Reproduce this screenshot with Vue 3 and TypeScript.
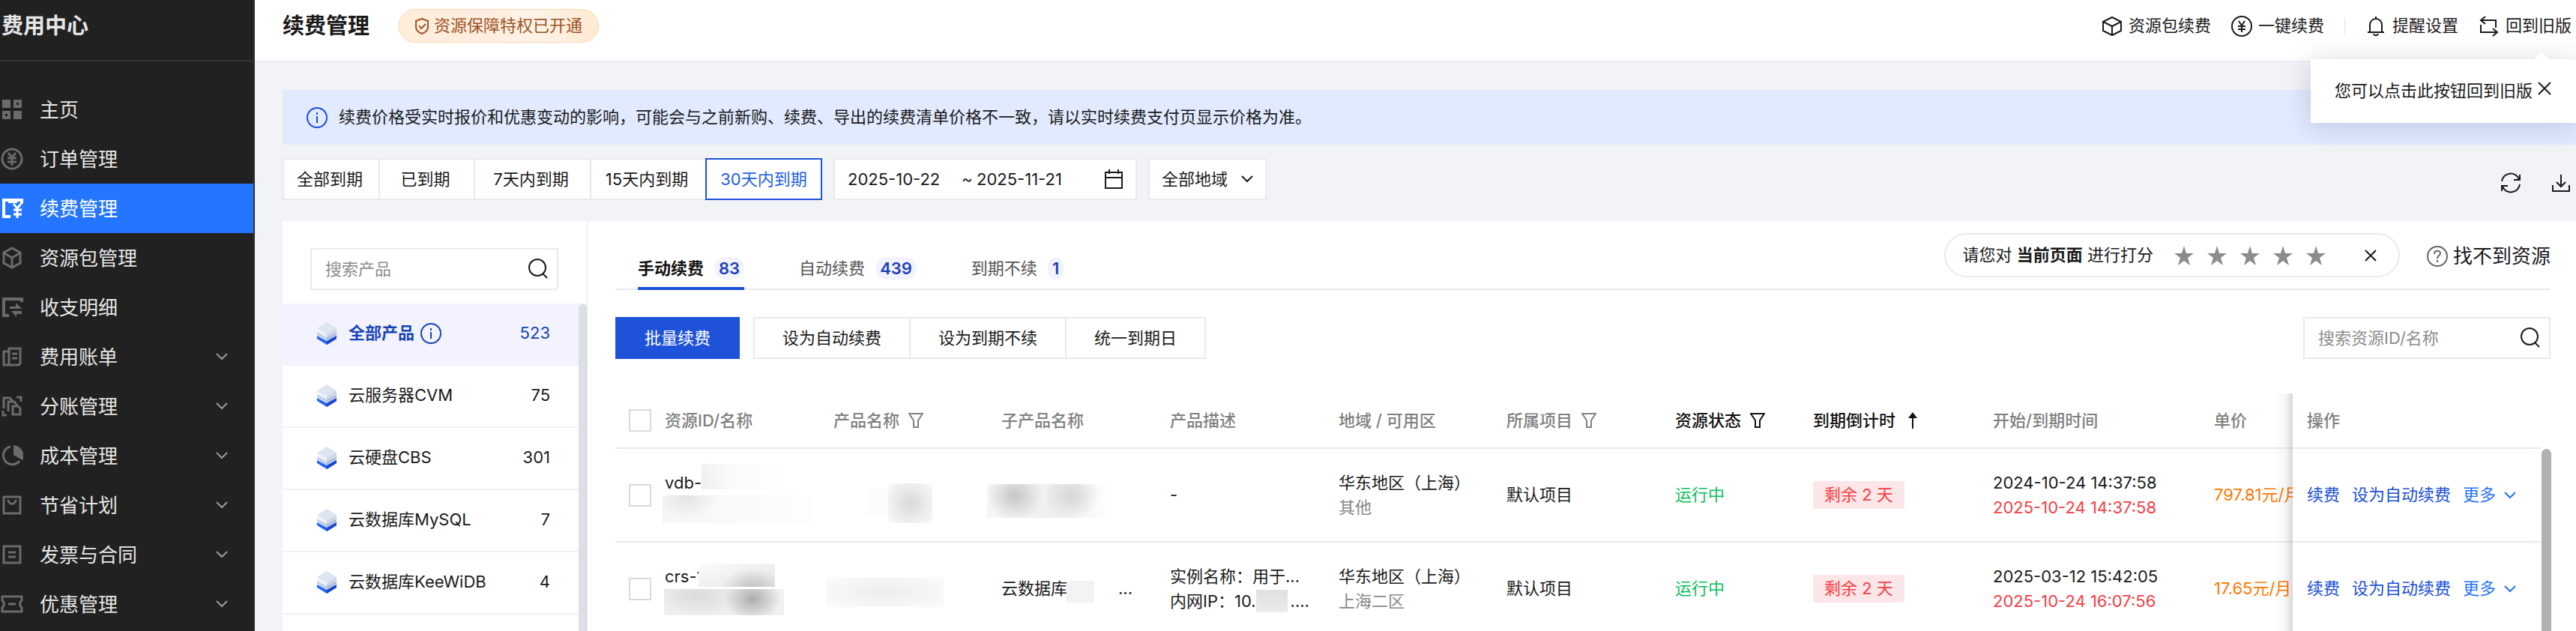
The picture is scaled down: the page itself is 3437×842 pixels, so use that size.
<script setup lang="ts">
import { ref } from 'vue'

interface MenuItem {
  icon: string
  label: string
  expandable?: boolean
}

interface Resource {
  key: string
  id: string
  sub: string
  desc: string[]
  region: string
  zone: string
  start: string
  end: string
  price: string
}

const menu: MenuItem[] = [
  { icon: 'home', label: '主页' },
  { icon: 'order', label: '订单管理' },
  { icon: 'renew', label: '续费管理' },
  { icon: 'package', label: '资源包管理' },
  { icon: 'flow', label: '收支明细' },
  { icon: 'bill', label: '费用账单', expandable: true },
  { icon: 'split', label: '分账管理', expandable: true },
  { icon: 'cost', label: '成本管理', expandable: true },
  { icon: 'saving', label: '节省计划', expandable: true },
  { icon: 'invoice', label: '发票与合同', expandable: true },
  { icon: 'coupon', label: '优惠管理', expandable: true },
]
const activeMenu = ref('renew')

const ranges = ['全部到期', '已到期', '7天内到期', '15天内到期', '30天内到期']
const activeRange = ref('30天内到期')
const dateFrom = ref('2025-10-22')
const dateTo = ref('2025-11-21')

const products = [
  { name: '全部产品', count: 523 },
  { name: '云服务器CVM', count: 75 },
  { name: '云硬盘CBS', count: 301 },
  { name: '云数据库MySQL', count: 7 },
  { name: '云数据库KeeWiDB', count: 4 },
]
const activeProduct = ref('全部产品')
const productQuery = ref('')
const resourceQuery = ref('')

const tabs = [
  { label: '手动续费', count: 83 },
  { label: '自动续费', count: 439 },
  { label: '到期不续', count: 1 },
]
const activeTab = ref('手动续费')

const columns = [
  { title: '资源ID/名称', width: 'w-l' },
  { title: '产品名称', width: 'w-m', filter: true },
  { title: '子产品名称', width: 'w-l' },
  { title: '产品描述', width: 'w-l' },
  { title: '地域 / 可用区', width: 'w-m' },
  { title: '所属项目', width: 'w-l', filter: true },
  { title: '资源状态', width: 'w-s', filter: true, strong: true },
  { title: '到期倒计时', width: 'w-c', sort: true, strong: true },
  { title: '开始/到期时间', width: 'w-t' },
  { title: '单价', width: 'w-s' },
]

const rows: Resource[] = [
  {
    key: 'vdb',
    id: 'vdb-',
    sub: '',
    desc: ['-'],
    region: '华东地区（上海）',
    zone: '其他',
    start: '2024-10-24 14:37:58',
    end: '2025-10-24 14:37:58',
    price: '797.81元/月',
  },
  {
    key: 'crs',
    id: 'crs-1',
    sub: '云数据库',
    desc: ['实例名称：用于...'],
    region: '华东地区（上海）',
    zone: '上海二区',
    start: '2025-03-12 15:42:05',
    end: '2025-10-24 16:07:56',
    price: '17.65元/月',
  },
]
</script>

<template>
  <div class="shell">
    <aside class="side">
      <h2 class="side-title">费用中心</h2>
      <nav>
        <ul class="menu">
          <li v-for="item in menu" :key="item.icon">
            <a href="#" class="menu-item" :class="{ active: item.icon === activeMenu }" @click.prevent="activeMenu = item.icon">
              <svg class="menu-icon" viewBox="0 0 30 30" fill="none" stroke="currentColor" stroke-width="4" aria-hidden="true">
                <g v-if="item.icon === 'home'" stroke="none" fill="currentColor" fill-rule="evenodd">
                  <path d="M2 2h11v11H2zM17 2h11v11H17zM21 6v3h3V6zM2 17h11v11H2zM6 21v3h3v-3zM17 17h11v11H17z" />
                </g>
                <g v-else-if="item.icon === 'order'">
                  <circle cx="15" cy="15" r="13" stroke-width="3" />
                  <path d="M10 7l5 6 5-6M15 12v12M9 14h12M9 19h12" stroke-width="3" />
                </g>
                <g v-else-if="item.icon === 'renew'">
                  <path d="M13 26H4V4h24v5" />
                  <path d="M10 6h12" />
                  <path d="M17 9l5 6 5-6M22 14v14M17 17h11M17 23h11" stroke-width="3" />
                </g>
                <g v-else-if="item.icon === 'package'">
                  <path d="M15 2l11 6v14l-11 6-11-6V8zM5 9l10 6 10-6M15 15v12" stroke-width="3" />
                </g>
                <g v-else-if="item.icon === 'flow'">
                  <path d="M11 26H4V4h24v4" />
                  <path d="M12 14h8V9l8 8H12zM28 20v4h-7v4l-7-8z" stroke="none" fill="currentColor" />
                </g>
                <g v-else-if="item.icon === 'bill'">
                  <path d="M11 4h15v20l-2 2H4V8h7zM11 6v20M15 11h7M15 17h7" stroke-width="3" />
                </g>
                <g v-else-if="item.icon === 'split'">
                  <path d="M4 18V4h8l4 4M10 22V9h8l4 5M16 15h7l3 3v8H16zM21 3h6v6M3 21v6h5" stroke-width="3" />
                </g>
                <g v-else-if="item.icon === 'cost'">
                  <path d="M13 3a12 12 0 1 0 12 19" stroke-width="3" />
                  <path d="M17 1a14 14 0 0 1 12 20l-12-7z" stroke="none" fill="currentColor" />
                </g>
                <g v-else-if="item.icon === 'saving'">
                  <path d="M4 4h22v22H4z" stroke-width="3" />
                  <path d="M10 8c0 7 10 7 10 0" stroke-width="3" />
                </g>
                <g v-else-if="item.icon === 'invoice'">
                  <path d="M4 4h22v22H4zM10 12h10M10 18h10" stroke-width="3" />
                </g>
                <g v-else>
                  <path d="M2 5h26v5q-5 5 0 10v5H2v-5q5-5 0-10zM10 15h10" stroke-width="3" />
                </g>
              </svg>
              <span>{{ item.label }}</span>
              <svg v-if="item.expandable" class="menu-arrow" viewBox="0 0 16 10" fill="none" stroke="currentColor" stroke-width="2" aria-hidden="true"><path d="M1 1l7 7 7-7" /></svg>
            </a>
          </li>
        </ul>
      </nav>
    </aside>

    <div class="main">
      <header class="top">
        <h1 class="page-title">续费管理</h1>
        <span class="privilege">
          <svg viewBox="0 0 20 22" fill="none" stroke="currentColor" stroke-width="2" aria-hidden="true"><path d="M10 1l8 3v8c0 4-3 7-8 9-5-2-8-5-8-9V4zM6 10l3 4 6-6" /></svg>
          资源保障特权已开通
        </span>
        <div class="top-actions">
          <a href="#" class="top-link">
            <svg viewBox="0 0 28 28" fill="none" stroke="currentColor" stroke-width="2" stroke-linejoin="round" aria-hidden="true"><path d="M14 2l12 6v12l-12 6-12-6V8zM2 8l12 6 12-6M14 14v12" /></svg>
            资源包续费
          </a>
          <a href="#" class="top-link">
            <svg viewBox="0 0 28 28" fill="none" stroke="currentColor" stroke-width="2" aria-hidden="true"><circle cx="14" cy="14" r="13" /><path d="M10 7l4 6 4-6M14 13v9M9 14h10M9 18h10" /></svg>
            一键续费
          </a>
          <i class="divider"></i>
          <a href="#" class="top-link">
            <svg viewBox="0 0 28 28" fill="none" stroke="currentColor" stroke-width="2" aria-hidden="true"><path d="M14 1v3M6 22V12a8 8 0 0 1 16 0v10M3 22h22M11 24c1 3 5 3 6 0" /></svg>
            提醒设置
          </a>
          <a href="#" class="top-link">
            <svg viewBox="0 0 28 28" fill="none" stroke="currentColor" stroke-width="2" aria-hidden="true"><path d="M9 1L3 6l6 5M3 6h20v10M19 17l6 5-6 5M25 22H3V12" /></svg>
            回到旧版
          </a>
        </div>
        <div class="popup" role="tooltip">
          <span>您可以点击此按钮回到旧版</span>
          <button type="button" class="plain popup-close" aria-label="关闭">
            <svg viewBox="0 0 18 18" fill="none" stroke="currentColor" stroke-width="2"><path d="M1 1l16 16M17 1L1 17" /></svg>
          </button>
        </div>
      </header>

      <main class="content">
        <div class="notice">
          <svg class="info" viewBox="0 0 28 28" fill="none" stroke="currentColor" stroke-width="2" aria-hidden="true"><circle cx="14" cy="14" r="13" /><path d="M14 12v9M14 7v3" /></svg>
          <p>续费价格受实时报价和优惠变动的影响，可能会与之前新购、续费、导出的续费清单价格不一致，请以实时续费支付页显示价格为准。</p>
        </div>

        <div class="filters">
          <div class="ranges">
            <button v-for="r in ranges" :key="r" type="button" :class="{ on: r === activeRange }" @click="activeRange = r">{{ r }}</button>
          </div>
          <div class="dates">
            <input v-model="dateFrom" type="text" aria-label="开始日期" />
            <span>~</span>
            <input v-model="dateTo" type="text" aria-label="结束日期" />
            <svg viewBox="0 0 26 26" fill="none" stroke="currentColor" stroke-width="2" aria-hidden="true"><path d="M2 4h22v21H2zM2 11h22M7 0v6M19 0v6" /></svg>
          </div>
          <label class="region">
            <select aria-label="地域"><option>全部地域</option></select>
            <svg viewBox="0 0 16 10" fill="none" stroke="currentColor" stroke-width="2" aria-hidden="true"><path d="M1 1l7 7 7-7" /></svg>
          </label>
          <div class="tools">
            <button type="button" class="plain" aria-label="刷新">
              <svg viewBox="0 0 28 28" fill="none" stroke="currentColor" stroke-width="2"><path d="M2 12A12 12 0 0 1 25 9M26 3v7h-8M26 16A12 12 0 0 1 3 19M2 25v-7h8" /></svg>
            </button>
            <button type="button" class="plain" aria-label="下载">
              <svg viewBox="0 0 28 28" fill="none" stroke="currentColor" stroke-width="2"><path d="M3 17v8h22v-8M14 3v16M8 13l6 6 6-6" /></svg>
            </button>
          </div>
        </div>

        <div class="panel">
          <section class="products">
            <label class="search product-search">
              <input v-model="productQuery" type="text" placeholder="搜索产品" aria-label="搜索产品" />
              <svg viewBox="0 0 28 28" fill="none" stroke="currentColor" stroke-width="2" aria-hidden="true"><circle cx="13" cy="12" r="11" /><path d="M20 20l6 6" /></svg>
            </label>
            <div class="product-body">
              <ul class="product-list">
                <li v-for="p in products" :key="p.name">
                  <button type="button" class="product" :class="{ on: p.name === activeProduct }" @click="activeProduct = p.name">
                    <svg class="cube" viewBox="0 0 28 32" aria-hidden="true">
                      <path d="M1 19l13 7 13-7v4l-13 8-13-8z" fill="#2566f5" />
                      <path d="M14 26l13-7v4l-13 8z" fill="#1c45cf" />
                      <path d="M1 14l13 7 13-7v4l-13 8-13-8z" fill="#c3d2ec" />
                      <path d="M14 21l13-7v4l-13 8z" fill="#aebfe0" />
                      <path d="M1 9l13-8 13 8-13 8z" fill="#dde4f2" />
                      <path d="M1 9l13 8v4L1 13z" fill="#eff2f8" />
                      <path d="M27 9l-13 8v4l13-8z" fill="#cdd4e2" />
                    </svg>
                    <span>{{ p.name }}</span>
                    <svg v-if="p.name === '全部产品'" class="info" viewBox="0 0 28 28" fill="none" stroke="currentColor" stroke-width="2" aria-hidden="true"><circle cx="14" cy="14" r="13" /><path d="M14 12v9M14 7v3" /></svg>
                    <span class="count">{{ p.count }}</span>
                  </button>
                </li>
              </ul>
              <div class="list-bar"></div>
            </div>
          </section>

          <section class="resources">
            <div class="tab-row">
              <div class="tabs" role="tablist">
                <button v-for="t in tabs" :key="t.label" type="button" role="tab" class="tab" :class="{ on: t.label === activeTab }" :aria-selected="t.label === activeTab" @click="activeTab = t.label">
                  {{ t.label }}<span class="badge">{{ t.count }}</span>
                </button>
              </div>
              <div class="rating">
                <span>请您对 <b>当前页面</b> 进行打分</span>
                <div class="stars">
                  <button v-for="n in 5" :key="n" type="button" class="plain" :aria-label="`${n} 星`">
                    <svg viewBox="0 0 26 26" fill="#8c8c8c"><path d="M13 0l3 10h10l-8 6 3 10-8-6-8 6 3-10-8-6h10z" /></svg>
                  </button>
                </div>
                <button type="button" class="plain rating-close" aria-label="关闭评分">
                  <svg viewBox="0 0 16 16" fill="none" stroke="currentColor" stroke-width="2"><path d="M1 1l14 14M15 1L1 15" /></svg>
                </button>
              </div>
              <a href="#" class="help">
                <svg viewBox="0 0 28 28" fill="none" stroke="#666" stroke-width="2" aria-hidden="true"><circle cx="14" cy="14" r="13" /><path d="M10 11c0-6 8-5 8-1 0 3-4 3-4 7M14 19v3" /></svg>
                找不到资源
              </a>
            </div>

            <div class="actions">
              <button type="button" class="primary">批量续费</button>
              <div class="group">
                <button type="button">设为自动续费</button>
                <button type="button">设为到期不续</button>
                <button type="button">统一到期日</button>
              </div>
              <label class="search resource-search">
                <input v-model="resourceQuery" type="text" placeholder="搜索资源ID/名称" aria-label="搜索资源ID/名称" />
                <svg viewBox="0 0 28 28" fill="none" stroke="currentColor" stroke-width="2" aria-hidden="true"><circle cx="13" cy="12" r="11" /><path d="M20 20l6 6" /></svg>
              </label>
            </div>

            <div class="table-area">
              <div class="table-scroll">
                <table>
                  <colgroup>
                    <col class="w-check" />
                    <col v-for="c in columns" :key="c.title" :class="c.width" />
                    <col class="w-ops" />
                  </colgroup>
                  <thead>
                    <tr>
                      <th class="check"><input type="checkbox" aria-label="全选" /></th>
                      <th v-for="c in columns" :key="c.title" :class="{ strong: c.strong }">
                        <div class="th">
                          {{ c.title }}
                          <svg v-if="c.filter" class="funnel" viewBox="0 0 20 20" fill="none" stroke="currentColor" stroke-width="2" aria-hidden="true"><path d="M1 1h18l-6 9v9H7v-9z" /></svg>
                          <svg v-if="c.sort" class="sort" viewBox="0 0 12 22" aria-hidden="true"><path d="M6 0l6 8H7v14H5V8H0z" fill="currentColor" /></svg>
                        </div>
                      </th>
                      <th class="ops">操作</th>
                    </tr>
                  </thead>
                  <tbody>
                    <tr v-for="row in rows" :key="row.key" :class="`row-${row.key}`">
                      <td class="check"><input type="checkbox" :aria-label="`选择 ${row.id}`" /></td>
                      <td class="id-cell">
                        <div class="line">{{ row.id }}</div>
                        <div class="line"></div>
                        <span class="mask mask-id"></span><span class="mask mask-name"></span>
                      </td>
                      <td><span class="mask mask-edge"></span><span class="mask mask-product"></span></td>
                      <td>
                        <div v-if="row.sub" class="sub">{{ row.sub }}<span>...</span></div>
                        <span class="mask mask-sub"></span>
                      </td>
                      <td>
                        <div v-for="d in row.desc" :key="d" class="line">{{ d }}</div>
                        <div v-if="row.key === 'crs'" class="line ip">内网IP：10.<i></i>....<span class="mask mask-ip"></span></div>
                      </td>
                      <td>
                        <div class="line">{{ row.region }}</div>
                        <div class="line muted">{{ row.zone }}</div>
                      </td>
                      <td>默认项目</td>
                      <td class="ok">运行中</td>
                      <td><span class="remain">剩余 2 天</span></td>
                      <td>
                        <div class="line">{{ row.start }}</div>
                        <div class="line danger">{{ row.end }}</div>
                      </td>
                      <td class="price">{{ row.price }}</td>
                      <td class="ops">
                        <div class="op-list">
                          <a href="#">续费</a>
                          <a href="#">设为自动续费</a>
                          <button type="button" class="plain more">更多
                            <svg viewBox="0 0 16 10" fill="none" stroke="currentColor" stroke-width="2" aria-hidden="true"><path d="M1 1l7 7 7-7" /></svg>
                          </button>
                        </div>
                      </td>
                    </tr>
                  </tbody>
                </table>
              </div>
              <div class="table-bar"></div>
            </div>
          </section>
        </div>
      </main>
    </div>
  </div>
</template>

<style>
html,
body {
  overflow: hidden;
}
</style>

<style scoped>
* {
  box-sizing: border-box;
}
.shell {
  display: flex;
  height: 100vh;
  overflow: hidden;
  font-family: Inter, "Noto Sans CJK SC", sans-serif;
  font-size: 22px;
  line-height: 33px;
  color: #1a1a1a;
  background: #f2f3f7;
  white-space: nowrap;
}
button,
input,
select {
  font: inherit;
  color: inherit;
  border-radius: 0;
  margin: 0;
}
button {
  cursor: pointer;
}
a {
  color: inherit;
  text-decoration: none;
}
ul,
p,
h1,
h2 {
  margin: 0;
  padding: 0;
  list-style: none;
}
svg {
  display: block;
  flex: none;
}
.plain {
  padding: 0;
  border: 0;
  background: none;
}

/* sidebar */
.side {
  flex: none;
  width: 340px;
  background: #212121;
  border-right: 2px solid #333;
  color: #e6e6e6;
}
.side-title {
  height: 82px;
  padding: 0 0 10px 2px;
  border-bottom: 2px solid #333;
  font-size: 29px;
  line-height: 70px;
  font-weight: 700;
}
.menu {
  padding-top: 31px;
}
.menu-item {
  display: flex;
  align-items: center;
  gap: 22px;
  height: 66px;
  padding: 0 34px 0 1px;
  font-size: 26px;
}
.menu-item.active {
  background: #2475ff;
  color: #fff;
}
.menu-icon {
  width: 30px;
  height: 30px;
  color: #6b6b6b;
}
.active .menu-icon {
  color: #fff;
}
.menu-arrow {
  width: 16px;
  height: 10px;
  margin-left: auto;
  color: #9a9a9a;
}

/* top bar */
.main {
  flex: 1;
  min-width: 0;
  display: flex;
  flex-direction: column;
}
.top {
  position: relative;
  z-index: 5;
  flex: none;
  display: flex;
  align-items: center;
  height: 82px;
  padding: 0 6px 12px 37px;
  background: #fff;
  border-bottom: 1px solid #e4e7ee;
}
.page-title {
  font-size: 29px;
  font-weight: 700;
}
.privilege {
  display: flex;
  align-items: center;
  gap: 6px;
  height: 45px;
  margin-left: 38px;
  padding: 0 21px;
  border: 1px solid #f9d9b4;
  border-radius: 23px;
  background: linear-gradient(90deg, #ffeddb, #ffeee0 45%, #fff3e6 70%, #ffe9d2);
  color: #9c5426;
}
.privilege svg {
  width: 20px;
  height: 22px;
}
.top-actions {
  display: flex;
  align-items: center;
  gap: 27px;
  margin-left: auto;
}
.top-link {
  display: flex;
  align-items: center;
  gap: 8px;
}
.top-link svg {
  width: 28px;
  height: 28px;
}
.divider {
  width: 1px;
  height: 22px;
  background: #e0e3e8;
}
.popup {
  position: absolute;
  top: 79px;
  right: 0;
  display: flex;
  gap: 7px;
  width: 354px;
  height: 85px;
  padding: 26px 0 0 32px;
  background: #fff;
  box-shadow: 0 4px 36px rgba(40, 50, 80, 0.2);
}
.popup::before {
  content: "";
  position: absolute;
  top: -9px;
  right: 36px;
  border: 10px solid transparent;
  border-top: 0;
  border-bottom: 9px solid #fff;
}
.popup-close {
  height: 26px;
}
.popup-close svg {
  width: 18px;
  height: 18px;
}

/* notice and filters */
.content {
  flex: 1;
  min-height: 0;
  display: flex;
  flex-direction: column;
  padding: 38px 0 0 37px;
}
.notice {
  flex: none;
  display: flex;
  align-items: center;
  gap: 15px;
  height: 73px;
  padding-left: 32px;
  background: #e1eaff;
}
.info {
  width: 28px;
  height: 28px;
}
.notice .info {
  color: #1d4fd8;
}
.filters {
  flex: none;
  display: flex;
  gap: 15px;
  height: 56px;
  margin: 18px 0 28px;
}
.ranges {
  display: grid;
  grid-template-columns: 128px 127px 155px 154px 156px;
}
.ranges button {
  padding: 0 4px 0 0;
  border: 2px solid #e7eaf0;
  border-right-width: 0;
  background: #fff;
}
.ranges button.on {
  padding: 0;
  border: 2px solid #1d52d9;
  color: #2460e0;
}
.dates {
  display: flex;
  align-items: center;
  width: 405px;
  padding: 0 16px 0 17px;
  border: 2px solid #e7eaf0;
  background: #fff;
}
.dates input {
  width: 134px;
  padding: 0;
  border: 0;
  outline: 0;
  background: none;
}
.dates span {
  width: 20px;
  margin-left: 18px;
}
.dates svg {
  width: 26px;
  height: 26px;
  margin-left: auto;
}
.region {
  display: flex;
  align-items: center;
  width: 158px;
  padding: 0 16px 0 16px;
  border: 2px solid #e7eaf0;
  background: #fff;
}
.region select {
  flex: 1;
  padding: 0;
  border: 0;
  background: none;
  appearance: none;
}
.region svg {
  width: 16px;
  height: 10px;
}
.tools {
  display: flex;
  align-items: center;
  gap: 39px;
  margin-left: auto;
  padding: 10px 6px 0 0;
}
.tools svg {
  width: 28px;
  height: 28px;
}

/* products */
.panel {
  flex: 1;
  min-height: 0;
  display: flex;
  background: #fff;
}
.products {
  flex: none;
  display: flex;
  flex-direction: column;
  width: 407px;
  border-right: 1px solid #e4e7ee;
}
.search {
  display: flex;
  align-items: center;
  height: 56px;
  padding: 0 11px 0 18px;
  border: 2px solid #e7eaf0;
  background: #fff;
}
.search input {
  flex: 1;
  min-width: 0;
  padding: 0;
  border: 0;
  outline: 0;
  background: none;
}
.search input::placeholder {
  color: #8c8c8c;
  opacity: 1;
}
.search svg {
  width: 28px;
  height: 28px;
}
.product-search {
  flex: none;
  margin: 36px 38px 18px 37px;
}
.product-body {
  flex: 1;
  min-height: 0;
  display: flex;
}
.product-list {
  flex: 1;
  overflow: hidden;
}
.product {
  display: flex;
  align-items: center;
  width: 100%;
  height: 83px;
  padding: 0 38px 2px 45px;
  border: 0;
  border-bottom: 2px solid #f1f2f8;
  background: none;
  text-align: left;
}
.product.on {
  background: #f2f3ff;
  color: #1744b5;
}
.product.on span:not(.count) {
  font-weight: 700;
}
.cube {
  width: 28px;
  height: 32px;
  margin-right: 15px;
}
.product .info {
  margin-left: 8px;
}
.count {
  margin-left: auto;
}
.list-bar {
  width: 11px;
  border-radius: 6px 6px 0 0;
  background: #dcdfe6;
}

/* tabs and rating */
.resources {
  flex: 1;
  min-width: 0;
  display: flex;
  flex-direction: column;
  padding: 0 34px 0 37px;
}
.tab-row {
  flex: none;
  display: flex;
  height: 92px;
  border-bottom: 2px solid #e7e9f0;
}
.tabs {
  display: flex;
  gap: 73px;
  padding-left: 30px;
}
.tab {
  display: flex;
  align-items: flex-start;
  gap: 14px;
  height: 92px;
  padding: 48px 0 0;
  border: 0;
  border-bottom: 4px solid transparent;
  background: none;
  line-height: 30px;
  color: #555;
}
.tab.on {
  border-bottom-color: #1d52d9;
  color: #111;
  font-weight: 700;
}
.badge {
  height: 30px;
  padding: 0 6px;
  border-radius: 15px;
  background: #f2f3ff;
  color: #1d3fb8;
  font-weight: 600;
}
.rating {
  display: flex;
  align-items: center;
  height: 59px;
  margin: 16px 0 0 auto;
  padding: 0 29px 0 23px;
  border: 2px solid #e7eaf0;
  border-radius: 30px;
}
.stars {
  display: flex;
  gap: 18px;
  margin-left: 28px;
}
.stars svg {
  width: 26px;
  height: 26px;
}
.rating-close {
  margin-left: 52px;
}
.rating-close svg {
  width: 16px;
  height: 16px;
}
.help {
  display: flex;
  align-items: center;
  gap: 7px;
  height: 59px;
  margin: 17px 0 0 36px;
  font-size: 26px;
}
.help svg {
  width: 28px;
  height: 28px;
}

/* actions */
.actions {
  flex: none;
  display: flex;
  gap: 18px;
  height: 56px;
  margin: 36px 0 46px;
}
.primary {
  padding: 0 38px;
  border: 1px solid #1d52d9;
  background: #1d52d9;
  color: #fff;
}
.group {
  display: flex;
}
.group button {
  padding: 0 37px;
  border: 2px solid #e7eaf0;
  border-right-width: 0;
  background: #fff;
}
.group button:last-child {
  border-right-width: 2px;
}
.resource-search {
  width: 330px;
  margin-left: auto;
}

/* table */
.table-area {
  flex: 1;
  min-height: 0;
  display: flex;
}
.table-scroll {
  flex: 1;
  min-width: 0;
  overflow: hidden;
}
table {
  width: 100%;
  min-width: 2630px;
  table-layout: fixed;
  border-collapse: separate;
  border-spacing: 0;
}
.w-check {
  width: 48px;
}
.w-l {
  width: 225px;
}
.w-m {
  width: 224px;
}
.w-s {
  width: 184px;
}
.w-c {
  width: 240px;
}
.w-t {
  width: 295px;
}
.w-ops {
  width: 332px;
}
th,
td {
  position: relative;
  padding: 0 18px;
  border-bottom: 2px solid #e7ebf1;
  text-align: left;
  font-weight: 400;
}
th {
  height: 74px;
  color: #808080;
  font-weight: 500;
}
th.strong {
  color: #111;
}
td {
  height: 125px;
}
.check input {
  appearance: none;
  display: block;
  width: 30px;
  height: 30px;
  border: 2px solid #d5dae4;
  background: #fff;
}
th.check,
td.check {
  padding: 0 0 0 18px;
}
.th {
  display: flex;
  align-items: center;
}
.funnel {
  width: 20px;
  height: 20px;
  margin-left: 12px;
}
.sort {
  width: 12px;
  height: 22px;
  margin-left: 17px;
}
.line {
  min-height: 33px;
}
.muted {
  color: #888;
}
.ok {
  color: #0abf5b;
}
.danger {
  color: #f54045;
}
.price {
  color: #ff7800;
}
.remain {
  display: inline-block;
  padding: 2px 15px;
  border-radius: 3px;
  background: #fce6e8;
  color: #f54045;
}
.sub span {
  margin-left: 68px;
}
.ip i {
  display: inline-block;
  width: 46px;
}
.ops {
  position: sticky;
  right: 0;
  z-index: 2;
  padding-left: 19px;
  background: #fff;
}
.ops::before {
  content: "";
  position: absolute;
  top: 0;
  bottom: -2px;
  left: -24px;
  width: 24px;
  background: linear-gradient(90deg, rgba(0, 0, 0, 0), rgba(0, 0, 0, 0.04) 60%, rgba(0, 0, 0, 0.15));
}
.op-list {
  display: flex;
  gap: 16px;
  color: #1a4fd8;
}
.more {
  display: flex;
  align-items: center;
  gap: 11px;
  color: #2673ff;
}
.more svg {
  width: 16px;
  height: 10px;
}
.table-bar {
  width: 13px;
  margin: 74px -1px 0 0;
  border-radius: 7px 7px 0 0;
  background: #b1b1b1;
}

/* redacted fragments laid over cell text */
.mask {
  position: absolute;
}
.row-vdb .mask-id {
  left: 67px;
  top: 20px;
  width: 110px;
  height: 34px;
  background: linear-gradient(75deg, #efefef, #fafafa 35%, #fefefe);
}
.row-vdb .mask-name {
  left: 15px;
  top: 62px;
  width: 198px;
  height: 37px;
  background: radial-gradient(ellipse 40px 30px at 32px 2px, #e4e4e4, transparent), linear-gradient(90deg, #f6f6f6, #fdfdfd);
}
.row-vdb .mask-edge {
  left: 64px;
  top: 52px;
  width: 27px;
  height: 36px;
  background: #fbfbfb;
}
.row-vdb .mask-product {
  left: 91px;
  top: 46px;
  width: 59px;
  height: 53px;
  background: radial-gradient(circle at center, #d9d9d9, #f9f9f9 95%);
}
.row-vdb .mask-sub {
  left: -1px;
  top: 47px;
  width: 167px;
  height: 45px;
  background: radial-gradient(ellipse 38px 34px at 37px 15px, #c6c6c6, transparent), radial-gradient(ellipse 38px 34px at 112px 15px, #d6d6d6, transparent), linear-gradient(90deg, #f6f6f6, #f0f0f0 55%, #fff);
}
.row-crs .mask-id {
  left: 63px;
  top: 28px;
  width: 102px;
  height: 31px;
  background: radial-gradient(ellipse 42px 28px at 72px 34px, #c0c0c0, transparent), linear-gradient(160deg, #fbfbfb, #e6e6e6);
}
.row-crs .mask-name {
  left: 17px;
  top: 62px;
  width: 160px;
  height: 35px;
  background: radial-gradient(ellipse 38px 30px at 118px 13px, #acacac, transparent), radial-gradient(ellipse 60px 30px at 44px 8px, #dadada, transparent), #f0f0f0;
}
.row-crs .mask-product {
  left: 9px;
  top: 46px;
  width: 156px;
  height: 40px;
  background: radial-gradient(ellipse at center, #ededed, #fafafa 90%);
}
.row-crs .mask-sub {
  left: 105px;
  top: 51px;
  width: 37px;
  height: 29px;
  background: #f3f3f3;
}
.row-crs .mask-ip {
  left: 133px;
  top: 63px;
  width: 42px;
  height: 30px;
  background: linear-gradient(#e0e0e0, #ebebeb);
}
</style>
